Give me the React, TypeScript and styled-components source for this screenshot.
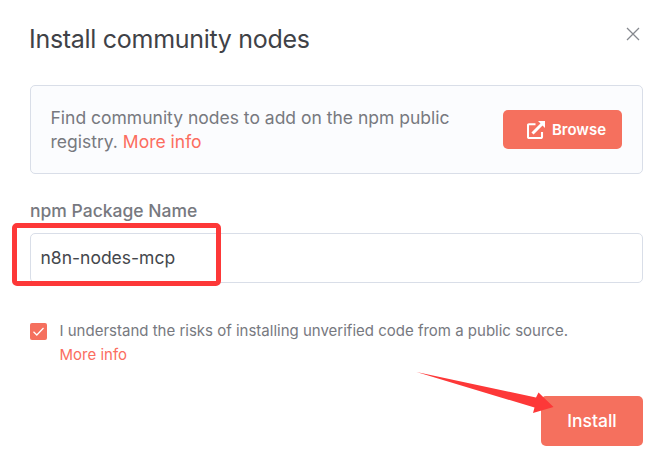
import React from 'react';
import styled, { createGlobalStyle } from 'styled-components';

const Global = createGlobalStyle`
  *, *::before, *::after { box-sizing: border-box; }
  body { margin: 0; background: #fff; font-family: Inter, "Liberation Sans", sans-serif; }
`;

const Dialog = styled.main`
  position: relative;
  display: flex;
  flex-direction: column;
  width: 668px;
  height: 466px;
  padding: 0 25px 20px 30px;
  overflow: hidden;
  background: #fff;
`;

const Header = styled.header`
  display: flex;
  align-items: flex-start;
  justify-content: space-between;
  height: 85px;
  padding-top: 24px;
`;

const Title = styled.h1`
  margin: 0 0 0 -1px;
  color: #3f4247;
  font-size: 25px;
  font-weight: 400;
  line-height: 31px;
  letter-spacing: -0.29px;
  white-space: nowrap;
`;

const CloseButton = styled.button`
  display: flex;
  margin: 3px 3px 0 0;
  padding: 0;
  border: 0;
  background: none;
  color: #85888e;
`;

const Notice = styled.section`
  display: flex;
  align-items: center;
  justify-content: space-between;
  height: 89px;
  padding: 0 20px;
  border: 1px solid #d9dee8;
  border-radius: 5px;
  background: #fbfcfe;
`;

const NoticeText = styled.p`
  width: 420px;
  margin: 0 0 0 -0.5px;
  color: #77797f;
  font-size: 17.5px;
  line-height: 24px;
`;

const Link = styled.a`
  color: #fb6d60;
  text-decoration: none;
`;

const Button = styled.button<{ $large?: boolean }>`
  display: flex;
  flex: none;
  align-items: center;
  justify-content: center;
  gap: 7px;
  width: ${({ $large }) => ($large ? 102 : 119)}px;
  height: ${({ $large }) => ($large ? 50 : 39)}px;
  padding: 0 0 ${({ $large }) => ($large ? '1px 0' : '0 8px')};
  border: 0;
  border-radius: 5px;
  background: #f5705e;
  color: #fff;
  font-family: inherit;
  font-size: ${({ $large }) => ($large ? 17.5 : 15)}px;
  font-weight: ${({ $large }) => ($large ? 500 : 600)};
`;

const Field = styled.label`
  display: flex;
  flex-direction: column;
  gap: 10px;
  margin-top: 25px;
  color: #77797f;
  font-size: 17.5px;
  font-weight: 500;
  line-height: 24px;
`;

const Input = styled.input`
  width: 100%;
  height: 50px;
  padding: 0 9.5px 2px;
  border: 1px solid #d9dee8;
  border-radius: 5px;
  outline: 0;
  background: #fff;
  color: #44474c;
  font-family: inherit;
  font-size: 17.5px;
`;

const Consent = styled.div`
  display: flex;
  align-items: flex-start;
  gap: 12.5px;
  margin-top: 36px;
`;

const Checkbox = styled.span`
  display: flex;
  flex: none;
  width: 17px;
  height: 17px;
  margin-top: 4px;
  border-radius: 2px;
  background: #f5705e;
`;

const ConsentText = styled.p`
  margin: 0;
  color: #77797f;
  font-size: 15px;
  line-height: 24px;
`;

const Footer = styled.footer`
  display: flex;
  justify-content: flex-end;
  margin-top: auto;
`;

/* Annotation marks drawn over the dialog */
const Highlight = styled.div`
  position: absolute;
  top: 223px;
  left: 12px;
  width: 209px;
  height: 63px;
  border: 5px solid #fd3838;
  border-radius: 5px;
  pointer-events: none;
`;

const Arrow = styled.svg`
  position: absolute;
  top: 370px;
  left: 415px;
  pointer-events: none;
`;

export default function App() {
  return (
    <>
      <Global />
      <Dialog>
        <Header>
          <Title>Install community nodes</Title>
          <CloseButton aria-label="Close">
            <svg width="14" height="14" viewBox="0 0 14 14" fill="none" stroke="currentColor" strokeWidth="1.25">
              <path d="M1 1l12 12M13 1L1 13" />
            </svg>
          </CloseButton>
        </Header>
        <Notice>
          <NoticeText>
            Find community nodes to add on the npm public
            <br />
            registry. <Link>More info</Link>
          </NoticeText>
          <Button>
            <svg width="18" height="18" viewBox="0 0 18 18" fill="none" stroke="#fff">
              <path d="M8.500 3.200H2Q1 3.200 1 4.200V16Q1 17 2 17H14Q15 17 15 16V11" strokeWidth="2.100" />
              <path d="M5.500 12.500L15 3" strokeWidth="3" />
              <path d="M11 0H18V7Z" fill="#fff" stroke="none" />
            </svg>
            Browse
          </Button>
        </Notice>
        <Field>
          npm Package Name
          <Input defaultValue="n8n-nodes-mcp" spellCheck={false} />
        </Field>
        <Consent>
          <Checkbox role="checkbox" aria-checked="true">
            <svg width="17" height="17" viewBox="0 0 17 17" fill="none" stroke="#fff" strokeWidth="1.250">
              <path d="M3.500 8.800L6.800 12L13.500 5" />
            </svg>
          </Checkbox>
          <ConsentText>
            I understand the risks of installing unverified code from a public source.
            <br />
            <Link>More info</Link>
          </ConsentText>
        </Consent>
        <Footer>
          <Button $large>Install</Button>
        </Footer>
        <Highlight />
        <Arrow width="140" height="45" viewBox="0 0 140 45">
          <path d="M1.500 2L121 27.500L123.500 22.500L138.500 37L118 43L119.500 37.500Z" fill="#fd3838" />
        </Arrow>
      </Dialog>
    </>
  );
}
